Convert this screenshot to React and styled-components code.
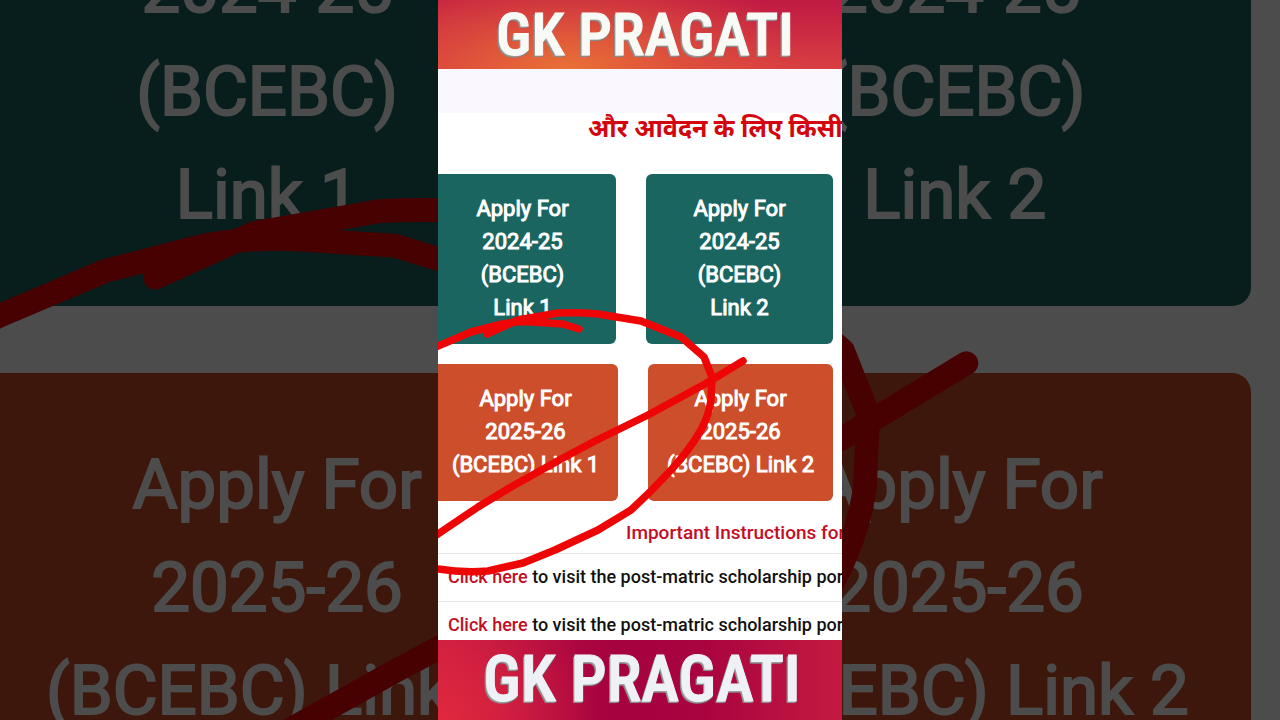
import React from 'react';
import styled, { createGlobalStyle } from 'styled-components';

const GlobalStyle = createGlobalStyle`
  *, *::before, *::after { box-sizing: border-box; }
  body {
    margin: 0;
    background: #4c4c4c;
    color: #111;
    font-family: Roboto, "Noto Sans", sans-serif;
  }
`;

const Stage = styled.div`
  position: relative;
  display: grid;
  grid-template-columns: 438fr 404fr 438fr;
  height: 100vh;
  overflow: hidden;
`;

const Backdrop = styled.div`
  position: absolute;
  inset: 0;
  overflow: hidden;
  background: #fff;
`;

const BackdropPage = styled.div`
  display: flex;
  flex-direction: column;
  gap: 67px;
  margin-top: -226px;
`;

const Shade = styled.div`
  position: absolute;
  inset: 0;
  background: rgba(0, 0, 0, 0.7);
`;

const Ink = styled.svg`
  position: absolute;
  inset: 0;
  width: 100%;
  height: 100%;
  pointer-events: none;
  fill: none;
  stroke: #ee0505;
  stroke-width: 7.5;
  stroke-linecap: round;
  stroke-linejoin: round;
`;

const Phone = styled.main`
  position: relative;
  grid-column: 2;
  display: flex;
  flex-direction: column;
  min-width: 0;
  height: 100vh;
  overflow: hidden;
  background: #fff;
`;

const Banner = styled.div`
  flex: none;
  display: flex;
  align-items: center;
  justify-content: center;
  height: ${(p) => (p.$foot ? 80 : 69)}px;
  padding-left: ${(p) => (p.$foot ? 4 : 10)}px;
  background: ${(p) =>
    p.$foot
      ? 'radial-gradient(ellipse 160px 140px at 0% 100%, #e0283e 0%, rgba(224, 40, 62, 0) 100%), linear-gradient(90deg, #c81c42 0%, #a60240 42%, #a90340 65%, #c41a40 100%)'
      : 'radial-gradient(ellipse 240px 110px at 32% 100%, #e87036 0%, rgba(226, 88, 56, 0.6) 50%, rgba(200, 34, 68, 0) 100%), linear-gradient(180deg, #c01a43 0%, #d83f42 100%)'};
`;

const BannerTitle = styled.h1`
  margin: 0;
  font-family: "Roboto Condensed", "Open Sans Condensed", "Liberation Sans Narrow", "DejaVu Sans Condensed", sans-serif;
  font-size: ${(p) => (p.$foot ? 64 : 60)}px;
  font-weight: 500;
  line-height: 64px;
  white-space: nowrap;
  color: ${(p) => (p.$foot ? '#eef2f6' : '#f8faf6')};
  -webkit-text-stroke: 1px currentColor;
  text-shadow: -1px 1px 0 #a9aaa8, -2px 2px 0 #8f8d8c, 0 2px 1px #7d7f80;
`;

const Content = styled.div`
  flex: 1;
  min-height: 0;
  overflow: hidden;
`;

const Strip = styled.div`
  height: 44px;
  background: #faf7ff;
`;

const Notice = styled.p`
  margin: 0 0 33px;
  padding-left: 150px;
  font-family: "Noto Sans", "Noto Sans Devanagari", sans-serif;
  font-size: 25px;
  font-weight: 700;
  line-height: 28px;
  white-space: nowrap;
  color: #d3060f;
`;

const CardRow = styled.div`
  display: grid;
  grid-template-columns: 1fr 1fr;
  gap: ${(p) => (p.$large ? 95 : 30)}px;
  margin-right: ${(p) => (p.$large ? 29 : 9)}px;
  margin-left: ${(p) => p.$left}px;
  margin-bottom: ${(p) => (p.$large ? 0 : 20)}px;
`;

const Card = styled.a`
  display: block;
  padding: ${(p) => (p.$large ? '60px 0' : '18px 0 20px')};
  border-radius: ${(p) => (p.$large ? 19 : 6)}px;
  background: ${(p) => (p.$tone === 'teal' ? '#1b6561' : '#cc4e2b')};
  color: #fff;
  font-size: ${(p) => (p.$large ? 69 : 22)}px;
  font-weight: 400;
  line-height: ${(p) => (p.$large ? 103 : 33)}px;
  text-align: center;
  text-decoration: none;
  white-space: pre-line;
  -webkit-text-stroke: ${(p) => (p.$large ? 2 : 1)}px #fff;
`;

const Heading = styled.h2`
  margin: 0;
  padding: 0 0 8px 188px;
  font-size: 19px;
  font-weight: 500;
  line-height: 24px;
  white-space: nowrap;
  color: #c40d25;
`;

const List = styled.ul`
  margin: 0;
  padding: 0;
  list-style: none;
`;

const Item = styled.li`
  padding: 11px 0 12px 10px;
  border-top: 1px solid #e4e6e8;
  font-size: 18px;
  font-weight: 500;
  line-height: 24px;
  white-space: nowrap;

  a {
    color: #c40d25;
    text-decoration: none;
  }
`;

const rows = [
  {
    tone: 'teal',
    left: -9,
    largeLeft: -29,
    labels: ['Apply For\n2024-25\n(BCEBC)\nLink 1', 'Apply For\n2024-25\n(BCEBC)\nLink 2'],
  },
  {
    tone: 'orange',
    left: -5,
    largeLeft: -16,
    labels: ['Apply For\n2025-26\n(BCEBC) Link 1', 'Apply For\n2025-26\n(BCEBC) Link 2'],
  },
];

function Cards({ large }) {
  return rows.map((row) => (
    <CardRow key={row.tone} $large={large} $left={large ? row.largeLeft : row.left}>
      {row.labels.map((label) => (
        <Card key={label} href="#apply" $large={large} $tone={row.tone}>
          {label}
        </Card>
      ))}
    </CardRow>
  ));
}

function Scribble({ viewBox }) {
  return (
    <Ink viewBox={viewBox} preserveAspectRatio="xMidYMid slice" aria-hidden="true">
      <path d="M-8 350 L0 346 L33 332 L60 325 Q75 321 95 322 L125 324 L141 329" />
      <path d="M49 334 L80 320 L120 313 Q140 312 160 314 L203 321 L243 337 L266 357 L274 377 L273 400 Q271 415 263 430 Q250 452 233 470 L213 491 L193 510 L160 530 L117 550 L85 563 L50 571 Q25 573 0 569 L-8 568" />
      <path d="M-8 539 L0 534 L40 507 L73 487 L125 458 L157 441 L210 415 L267 384 L305 361" />
    </Ink>
  );
}

export default function App() {
  return (
    <>
      <GlobalStyle />
      <Stage>
        <Backdrop aria-hidden="true">
          <BackdropPage>
            <Cards large />
          </BackdropPage>
          <Scribble viewBox="0 246.4 404 227.2" />
          <Shade />
        </Backdrop>
        <Phone>
          <Banner>
            <BannerTitle>GK PRAGATI</BannerTitle>
          </Banner>
          <Content>
            <Strip />
            <Notice lang="hi">और आवेदन के लिए किसी</Notice>
            <Cards />
            <Heading>Important Instructions for</Heading>
            <List>
              <Item>
                <a href="#portal">Click here</a> to visit the post-matric scholarship portal
              </Item>
              <Item>
                <a href="#portal">Click here</a> to visit the post-matric scholarship portal
              </Item>
            </List>
          </Content>
          <Scribble viewBox="0 0 404 720" />
          <Banner $foot>
            <BannerTitle as="p" $foot>GK PRAGATI</BannerTitle>
          </Banner>
        </Phone>
      </Stage>
    </>
  );
}
